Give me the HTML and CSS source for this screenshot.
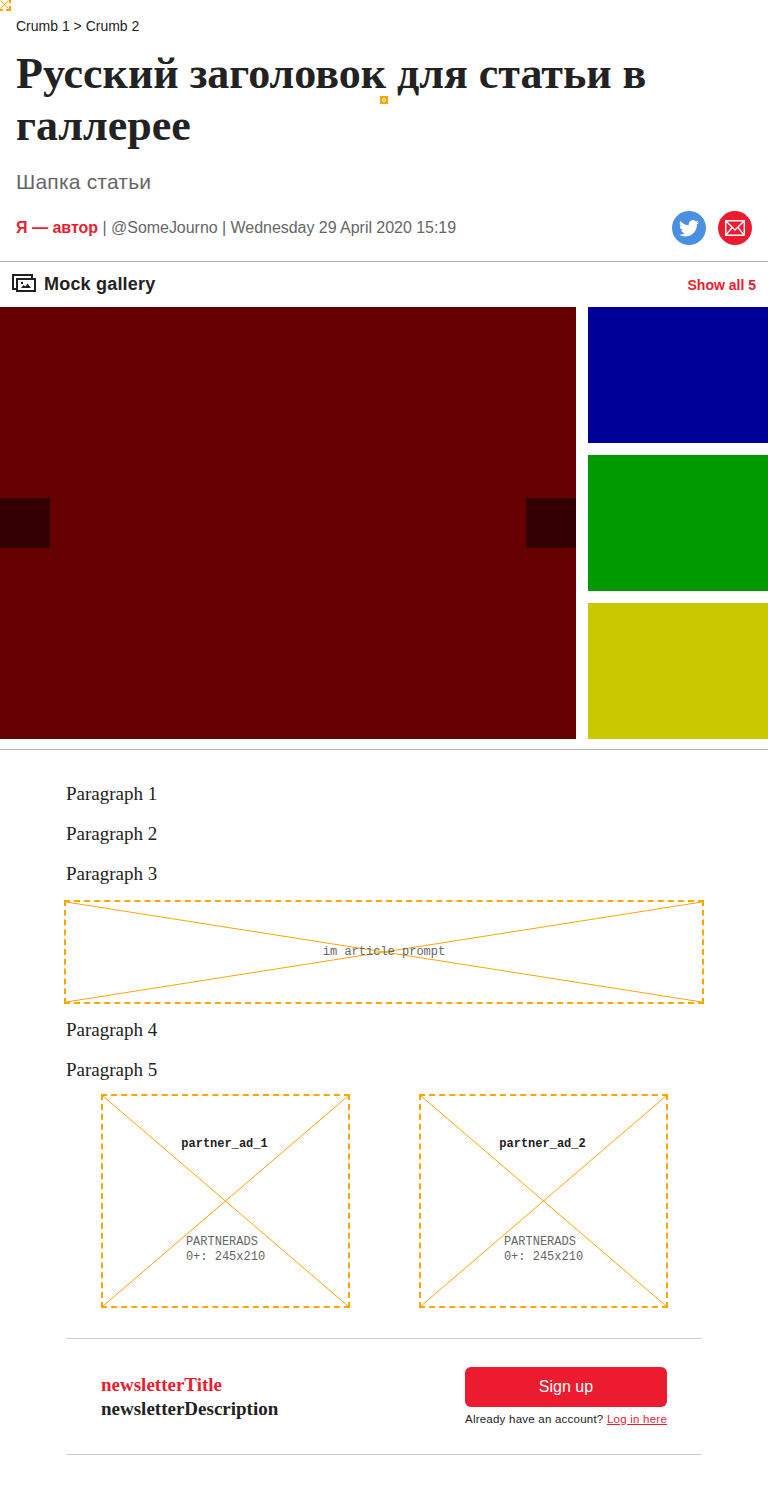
FILE: index.html
```
<!DOCTYPE html>
<html lang="ru">
<head>
<meta charset="utf-8">
<title>Русский заголовок для статьи в галлерее</title>
<link rel="stylesheet" href="styles.css">
</head>
<body>
<svg class="marker marker-corner" width="11" height="11" viewBox="0 0 11 11"><path d="M0 10h3M6 10h5M10 11V6M10 3V0" stroke="orange" stroke-width="2" fill="none"/><path d="M.5 .5l8 8M8.500.5l-8 8" stroke="orange" fill="none"/></svg>
<svg class="marker marker-center" width="8" height="8" viewBox="0 0 8 8"><path d="M0 0h8v8H0z" fill="orange"/><circle cx="4" cy="4" r="1.5" fill="none" stroke="#fff"/></svg>
<header class="head">
  <nav class="crumbs">Crumb 1 &gt; Crumb 2</nav>
  <h1 class="title">Русский заголовок для статьи в галлерее</h1>
  <p class="standfirst">Шапка статьи</p>
  <div class="meta">
    <p class="byline"><b class="author">Я — автор</b> | @SomeJourno | Wednesday 29 April 2020 15:19</p>
    <div class="share">
      <a class="share-btn twitter"><svg width="20" height="17" viewBox="0 0 24 20"><path fill="#fff" d="M24 2.4a9.600 9.600 0 0 1-2.800.8A5 5 0 0 0 23.300.5a9.800 9.800 0 0 1-3.100 1.200 4.900 4.900 0 0 0-8.400 4.500A14 14 0 0 1 1.700 1a4.900 4.900 0 0 0 1.500 6.600A4.900 4.900 0 0 1 1 7v.1a4.900 4.900 0 0 0 3.900 4.800 4.900 4.900 0 0 1-2.200.1 4.900 4.900 0 0 0 4.600 3.400A9.900 9.900 0 0 1 0 17.500 13.900 13.900 0 0 0 7.500 19.700c9.100 0 14.300-7.700 14-14.700A10 10 0 0 0 24 2.400z"/></svg></a>
      <a class="share-btn mail"><svg width="20" height="16" viewBox="0 0 20 16"><path d="M.75.75h18.500v14.500H.75zM1 1l9 9 9-9M1 15l6-7.500M19 15l-6-7.500" fill="none" stroke="#fff" stroke-width="1.400"/></svg></a>
    </div>
  </div>
</header>
<section class="gallery">
  <div class="gallery-head">
    <svg class="gallery-icon" width="24" height="18" viewBox="0 0 24 18"><path d="M5 5h18v12H5z" fill="none" stroke="#222" stroke-width="2"/><path d="M4 15H1V1h19v3" fill="none" stroke="#222" stroke-width="2"/><path d="M9 14l2.500-3 2 1.500L15.500 9.500l3.500 4.500zM9 8h2v2H9z" fill="#222"/></svg>
    <h2 class="gallery-title">Mock gallery</h2>
    <a class="show-all">Show all 5</a>
  </div>
  <div class="gallery-body">
    <div class="stage"><span class="arrow"></span><span class="arrow"></span></div>
    <div class="thumbs"><div class="thumb blue"></div><div class="thumb green"></div><div class="thumb yellow"></div></div>
  </div>
</section>
<main class="article">
  <p class="para">Paragraph 1</p>
  <p class="para">Paragraph 2</p>
  <p class="para">Paragraph 3</p>
  <div class="slot prompt">
    <svg class="cross" viewBox="0 0 636 100" preserveAspectRatio="none"><path d="M0 0l636 100M636 0L0 100"/></svg>
    <span class="slot-label">im article prompt</span>
  </div>
  <p class="para">Paragraph 4</p>
  <p class="para">Paragraph 5</p>
  <div class="ads">
    <div class="slot ad">
      <svg class="cross" viewBox="0 0 245 210" preserveAspectRatio="none"><path d="M0 0l245 210M245 0L0 210"/></svg>
      <b class="ad-name">partner_ad_1</b>
      <span class="ad-size">PARTNERADS<br>0+: 245x210</span>
    </div>
    <div class="slot ad">
      <svg class="cross" viewBox="0 0 245 210" preserveAspectRatio="none"><path d="M0 0l245 210M245 0L0 210"/></svg>
      <b class="ad-name">partner_ad_2</b>
      <span class="ad-size">PARTNERADS<br>0+: 245x210</span>
    </div>
  </div>
  <section class="newsletter">
    <div class="news-text"><div class="news-title">newsletterTitle</div><div>newsletterDescription</div></div>
    <div class="signup">
      <a class="signup-btn">Sign up</a>
      <p class="login">Already have an account? <a class="login-link">Log in here</a></p>
    </div>
  </section>
</main>
</body>
</html>
```
FILE: styles.css
```
* { box-sizing: border-box; }
body { margin: 0; background: #fff; color: #222; font-family: "Liberation Sans", Arial, sans-serif; position: relative; height: 1495px; }
h1, h2, p { margin: 0; }
svg { display: block; }
.marker { position: absolute; }
.marker-corner { left: 0; top: 0; }
.marker-center { left: 380px; top: 96px; }
.head { height: 262px; padding: 16px 16px 0; border-bottom: 1px solid #bbb; }
.crumbs { font-size: 14px; line-height: 20px; }
.title { margin-top: 12px; font: bold 44px/52px "Liberation Serif", "Times New Roman", serif; }
.standfirst { margin-top: 16px; font-size: 21px; line-height: 28px; letter-spacing: .2px; color: #666; }
.meta { margin-top: 15px; display: flex; justify-content: space-between; align-items: center; }
.byline { font-size: 16px; line-height: 24px; letter-spacing: -.035px; color: #666; }
.author { color: #ed1b2f; letter-spacing: 0; }
.share { display: flex; gap: 12px; }
.share-btn { width: 34px; height: 34px; border-radius: 50%; display: flex; align-items: center; justify-content: center; }
.twitter { background: #4a90e2; }
.mail { background: #ed1b2f; }
.gallery { height: 488px; border-bottom: 1px solid #bbb; }
.gallery-head { height: 45px; padding: 0 12px; display: flex; align-items: center; gap: 8px; }
.gallery-icon { margin-bottom: 4px; }
.gallery-title { flex: 1; margin-bottom: 2px; font-size: 18px; line-height: 24px; letter-spacing: .2px; }
.show-all { color: #ed1b2f; font-weight: bold; font-size: 14px; line-height: 20px; }
.gallery-body { display: flex; gap: 12px; height: 432px; }
.stage { width: 576px; background: #600; display: flex; justify-content: space-between; align-items: center; }
.arrow { width: 50px; height: 50px; background: #300; }
.thumbs { flex: 1; display: flex; flex-direction: column; gap: 12px; }
.thumb { flex: 1; }
.blue { background: #009; }
.green { background: #090; }
.yellow { background: #c9c900; }
.article { width: 636px; margin: 0 auto; padding-top: 32px; }
.para { font: 19px/24px "Liberation Serif", "Times New Roman", serif; margin-bottom: 16px; }
.slot { position: relative; border: 2px dashed orange; font-family: "Courier New", "Liberation Mono", monospace; font-size: 12px; line-height: 15px; }
.cross { position: absolute; inset: 0; width: 100%; height: 100%; fill: none; stroke: orange; stroke-width: 1; }
.prompt { width: 640px; height: 104px; margin: -2px -2px 14px; display: flex; align-items: center; justify-content: center; }
.slot-label, .ad-size { position: relative; color: #666; }
.ads { display: flex; justify-content: space-between; padding: 0 34px 0 35px; margin-top: -4px; }
.ad { width: 249px; height: 214px; padding-top: 41px; display: flex; flex-direction: column; align-items: center; }
.ad-name { position: relative; margin-right: 2px; }
.ad-size { margin-top: 83px; }
.newsletter { margin-top: 30px; height: 117px; padding: 28px 35px 0; border-top: 1px solid #ccc; border-bottom: 1px solid #ccc; display: flex; justify-content: space-between; }
.news-text { margin-top: 6px; font: bold 19px/24px "Liberation Serif", "Times New Roman", serif; }
.news-title, .login-link { color: #ed1b2f; }
.signup { width: 202px; }
.signup-btn { display: flex; align-items: center; justify-content: center; height: 40px; border-radius: 6px; background: #ed1b2f; color: #fff; font-size: 16px; }
.login { margin-top: 4px; font-size: 11.5px; letter-spacing: .23px; line-height: 16px; white-space: nowrap; }
.login-link { text-decoration: underline; }
```
